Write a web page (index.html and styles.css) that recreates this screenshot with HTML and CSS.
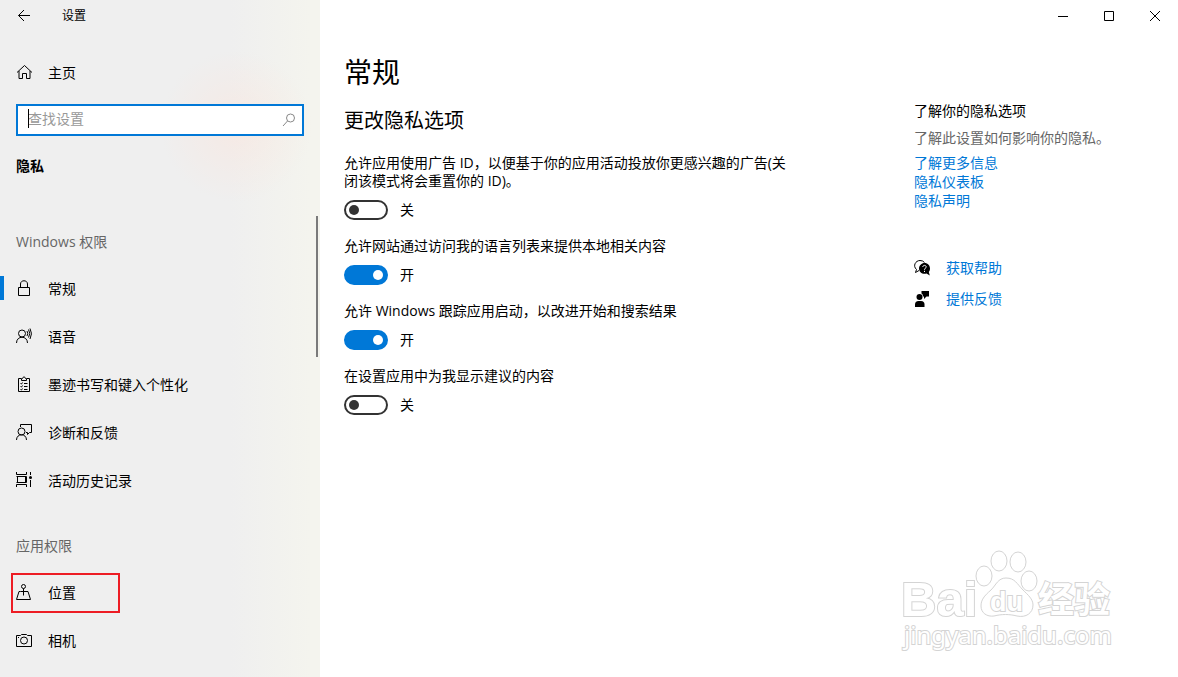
FILE: index.html
```html
<!doctype html>
<html lang="zh-CN">
  <head>
    <meta charset="utf-8">
    <title>设置</title>
    <meta name="viewport" content="width=device-width, initial-scale=1.0"/>
    <link rel="stylesheet" href="styles.css">
  </head>
  <body>

    <!--SIDEBAR-->
    <div id="sidebar">
        <div class="titlebar">
            <button class="back" type="button" aria-label="返回">
                <svg width="14" height="14" viewBox="0 0 14 14"><path d="M1.5 6.5H13M7 1L1.5 6.5L7 12"/></svg>
            </button>
            <span class="app-name">设置</span>
        </div>

        <a class="nav-item home" href="#home">
            <svg class="icon" viewBox="0 0 16 16"><path d="M1 8.5L8.5 1.5L16 8.5M3 7V14.5H6.5V9.5H10.5V14.5H14V7"/></svg>
            主页
        </a>

        <div class="search">
            <input id="search" type="text" placeholder="查找设置" aria-label="查找设置" autocomplete="off"/>
            <span class="caret"></span>
            <svg class="search-icon" width="14" height="14" viewBox="0 0 14 14"><circle cx="8.5" cy="5" r="4"/><path d="M5.5 8L1 13"/></svg>
        </div>

        <h2 class="section">隐私</h2>

        <nav>
            <h3>Windows 权限</h3>
            <a class="nav-item active" href="#general">
                <svg class="icon" viewBox="0 0 16 16"><path d="M2.5 7.5H13.5V15.5H2.5ZM4.5 7.5V4C4.5 -.3 11.5 -.3 11.5 4V7.5"/></svg>
                常规
            </a>
            <a class="nav-item" href="#speech">
                <svg class="icon" viewBox="0 0 16 16"><circle cx="6" cy="5.5" r="3.5"/><path d="M.5 15C.5 7.3 11.5 7.3 11.5 15M11 3Q12.5 5.5 11 8M12.5 1.5Q15 5.5 12.5 9.5M14 .5Q17 5.5 14 11"/></svg>
                语音
            </a>
            <a class="nav-item" href="#inking">
                <svg class="icon" viewBox="0 0 16 16"><path d="M5 2.5H2.5V15.5H13.5V2.5H11M5.5 4.5V2.5H6.5Q8 -1 9.5 2.5H10.5V4.5ZM4.5 7.5L5.5 8L6.5 6.5M4.5 10.5L5.5 11L6.5 9.5M4.5 13.5L5.5 14L6.5 12.5M8 7.5H11.5M8 10.5H11.5M8 13.5H11.5"/></svg>
                墨迹书写和键入个性化
            </a>
            <a class="nav-item" href="#diagnostics">
                <svg class="icon" viewBox="0 0 16 16"><circle cx="5.5" cy="7.5" r="3.5"/><path d="M.5 16C.5 9 10.5 9 10.5 16M4.5 3V.5H15.5V8.5H13.5L11.5 10.5V8.5H10"/></svg>
                诊断和反馈
            </a>
            <a class="nav-item" href="#activity">
                <svg class="icon" viewBox="0 0 16 16"><path d="M.5 0V2.5H10.5V0M.5 15V12.5H10.5V15M1.5 4.5V10.5M9.5 4.5V10.5M.5 4.5H10.5V10.5H.5M14.5 0V3M14.5 8V15"/><circle class="solid" cx="14.5" cy="5.5" r="1.5"/></svg>
                活动历史记录
            </a>

            <h3>应用权限</h3>
            <a class="nav-item marked" href="#location">
                <svg class="icon" viewBox="0 0 16 16"><circle cx="7.5" cy="2.5" r="2"/><path d="M7.5 4.5V11.5M4.5 7.5H3L.5 15.5H14.5L12 7.5H4.5"/></svg>
                位置
            </a>
            <a class="nav-item" href="#camera">
                <svg class="icon" viewBox="0 0 16 16"><path d="M.5 3.5H4.5L5.5 2.5H10.5L11.5 3.5H15.5V14.5H.5Z"/><circle cx="8" cy="8.5" r="3.5"/><path d="M2 5.5H3"/></svg>
                相机
            </a>
        </nav>
        <div class="scrollbar"></div>
    </div>

    <!--CONTENT-->
    <div id="main">
        <div class="titlebar window-buttons">
            <button type="button" aria-label="最小化"><svg width="12" height="12" viewBox="0 0 12 12"><path d="M1 6.5H11"/></svg></button>
            <button type="button" aria-label="最大化"><svg width="12" height="12" viewBox="0 0 12 12"><path d="M1.5 1.5H10.5V10.5H1.5Z"/></svg></button>
            <button type="button" aria-label="关闭"><svg width="12" height="12" viewBox="0 0 12 12"><path d="M1 1L11 11M11 1L1 11"/></svg></button>
        </div>

        <div class="columns">
            <main>
                <h1>常规</h1>
                <h2>更改隐私选项</h2>

                <div class="setting">
                    <label for="ad-id">允许应用使用广告 ID，以便基于你的应用活动投放你更感兴趣的广告(关闭该模式将会重置你的 ID)。</label>
                    <div class="toggle"><input id="ad-id" type="checkbox"/><span>关</span></div>
                </div>
                <div class="setting">
                    <label for="language">允许网站通过访问我的语言列表来提供本地相关内容</label>
                    <div class="toggle"><input id="language" type="checkbox" checked/><span>开</span></div>
                </div>
                <div class="setting">
                    <label for="launch">允许 Windows 跟踪应用启动，以改进开始和搜索结果</label>
                    <div class="toggle"><input id="launch" type="checkbox" checked/><span>开</span></div>
                </div>
                <div class="setting">
                    <label for="suggest">在设置应用中为我显示建议的内容</label>
                    <div class="toggle"><input id="suggest" type="checkbox"/><span>关</span></div>
                </div>
            </main>

            <aside>
                <h4>了解你的隐私选项</h4>
                <p>了解此设置如何影响你的隐私。</p>
                <div class="links">
                    <a href="#more">了解更多信息</a>
                    <a href="#dashboard">隐私仪表板</a>
                    <a href="#statement">隐私声明</a>
                </div>
                <div class="help">
                    <svg viewBox="0 0 16 16"><path class="line" d="M5 10.5L1.5 12.5L2.5 9.5C-1.5 6 1.5 .5 6 .5Q9 .5 10.5 2.5"/><path d="M10.5 3C14 3 16 5.5 16 8.5C16 10 15.5 11.2 14.8 12L15.8 15.5L12.5 13.6C8 14.5 5 12 5 8.5C5 5.5 7.5 3 10.5 3Z"/><path class="question" d="M8.8 7C8.8 4.8 12.3 4.9 12.2 7C12.1 8.3 10.5 8.2 10.5 9.8M10.5 10.8V12"/></svg>
                    <a href="#help">获取帮助</a>
                </div>
                <div class="help">
                    <svg viewBox="0 0 16 16"><path d="M7.5 0H15V5.5H12.5L10 8V5.5H9Q9 3 7.5 2.5Z"/><circle cx="5.5" cy="6" r="3"/><path d="M1 16V13.5Q1 10 4.5 10H7Q10.5 10 10.5 13.5V16Z"/></svg>
                    <a href="#feedback">提供反馈</a>
                </div>
            </aside>
        </div>
    </div>

    <!--WATERMARK-->
    <svg class="watermark" width="220" height="106" viewBox="0 0 220 106">
        <g class="brand">
            <text x="1" y="69">Bai</text>
            <path d="M106 31C98 31 96 38 91 43C84 49 81 53 81 59C81 66 87 70 94 69C102 67 109 67 117 69C126 71 133 66 133 58C133 52 128 48 123 43C117 37 115 31 106 31Z"/>
            <ellipse cx="84" cy="29" rx="8" ry="10"/>
            <ellipse cx="99" cy="14" rx="8" ry="10"/>
            <ellipse cx="118" cy="15" rx="8" ry="10"/>
            <ellipse cx="129" cy="34" rx="8" ry="10"/>
            <text class="du" x="90" y="64">du</text>
            <text class="jingyan" x="138" y="66">经验</text>
        </g>
        <text class="site" x="4" y="97">jingyan.baidu.com</text>
    </svg>

  </body>
</html>
```
FILE: styles.css
```css
*, *:before, *:after {
    box-sizing: border-box;
}

html,body{
    margin:0;
    padding:0;
}
body{
    display: flex;
    min-height:100vh;
    position: relative;
    background-color:#fff;
    color:#000;
    font-family: "Open Sans", "Noto Sans CJK SC", sans-serif;
    font-size: 14px;
    line-height: 20px;
}
h1,h2,h3,h4,p{
    margin:0;
    font-weight: normal;
}
a{
    color:#0078d7;
    text-decoration: none;
}
button{
    display: flex;
    align-items: center;
    justify-content: center;
    height:32px;
    padding:0;
    border:0;
    background: none;
}
svg{
    fill: none;
    stroke:#000;
    stroke-width: 1;
}
.titlebar{
    display: flex;
    align-items: center;
    height:32px;
}


/* sidebar */
#sidebar{
    position: relative;
    flex: 0 0 320px;
    background:
        radial-gradient(circle at 236px 126px, rgba(255,224,212,.4), rgba(255,224,212,0) 76px),
        linear-gradient(90deg, #efefef 0, #efefef 230px, #f4f4ee 310px);
}
.back{
    width:48px;
}
.app-name{
    margin-left:14px;
    font-size: 12px;
}
.nav-item{
    position: relative;
    display: flex;
    align-items: center;
    gap:16px;
    height:48px;
    padding-left:16px;
    color:#000;
}
.icon{
    width:16px;
    height:16px;
    margin-bottom:2px;
    overflow: visible;
}
.icon .solid{
    fill:#000;
    stroke: none;
}
.home{
    margin-top:17px;
}
.search{
    position: relative;
    margin:7px 16px 14px;
}
.search input{
    display: block;
    width:100%;
    height:32px;
    margin:0;
    padding:0 32px 3px 10px;
    border:2px solid #0078d7;
    border-radius: 0;
    background-color:#fff;
    font: inherit;
    outline: none;
}
.search input::placeholder{
    color:#999;
    opacity: 1;
}
.caret{
    position: absolute;
    left:12px;
    top:5px;
    width:1px;
    height:19px;
    background-color:#000;
}
.search-icon{
    position: absolute;
    right:8px;
    top:9px;
    stroke:#888;
}
.section{
    height:32px;
    margin:0 16px 19px;
    font-size: 14px;
    font-weight: bold;
    line-height: 32px;
}
nav h3{
    padding:18px 16px 0;
    color:#666;
    font-size: 14px;
    line-height: 46px;
}
.active:before{
    content: "";
    position: absolute;
    left:0;
    top:11px;
    width:4px;
    height:24px;
    background-color:#0078d7;
}
.marked:after{
    content: "";
    position: absolute;
    left:11px;
    top:4px;
    width:109px;
    height:40px;
    border:2px solid #ed1c24;
}
.scrollbar{
    position: absolute;
    right:2px;
    top:216px;
    width:2px;
    height:141px;
    background-color:#7a7a7a;
}


/* content */
#main{
    flex: 1;
    min-width: 0;
}
.window-buttons{
    justify-content: flex-end;
}
.window-buttons button{
    width:46px;
}
.columns{
    display: grid;
    grid-template-columns: minmax(0, 570px) 1fr;
    padding:20px 24px;
}
main{
    max-width:448px;
}
h1{
    margin-bottom:15px;
    font-size: 28px;
    line-height: 40px;
}
main h2{
    margin-bottom:19px;
    font-size: 20px;
    line-height: 28px;
}
.setting{
    margin-bottom:17px;
    line-height: 18px;
}
.setting label{
    display: block;
    margin-bottom:10px;
}
.toggle{
    display: flex;
    align-items: center;
    gap:12px;
    height:20px;
    line-height: 20px;
}
.toggle input{
    -webkit-appearance: none;
    appearance: none;
    position: relative;
    width:44px;
    height:20px;
    margin:0;
    border:2px solid #333;
    border-radius: 10px;
}
.toggle input:before{
    content: "";
    position: absolute;
    left:3px;
    top:3px;
    width:10px;
    height:10px;
    border-radius: 50%;
    background-color:#333;
}
.toggle input:checked{
    border-color:#0078d7;
    background-color:#0078d7;
}
.toggle input:checked:before{
    left:27px;
    background-color:#fff;
}

aside{
    padding-top:49px;
}
aside h4{
    margin-bottom:7px;
    font-size: 14px;
}
aside p{
    margin-bottom:5px;
    color:#666;
}
.links{
    display: flex;
    flex-direction: column;
    align-items: flex-start;
    margin-bottom:48px;
    line-height: 19px;
}
.help{
    display: flex;
    align-items: center;
    gap:16px;
    margin-bottom:11px;
}
.help svg{
    width:16px;
    height:16px;
    fill:#000;
    stroke: none;
    overflow: visible;
}
.help .line{
    fill: none;
    stroke:#000;
}
.help .question{
    fill: none;
    stroke:#fff;
}


/* watermark */
.watermark{
    position: absolute;
    right:58px;
    bottom:24px;
    fill:#fff;
    stroke:#d4d4d4;
    pointer-events: none;
}
.watermark text{
    font-family: "Liberation Sans", sans-serif;
    font-weight: bold;
    paint-order: stroke;
    stroke-width: 2px;
}
.brand text{
    font-size: 49px;
}
.brand .du{
    font-size: 27px;
}
.brand .jingyan{
    font-family: "Noto Sans CJK SC", sans-serif;
    font-size: 36px;
}
.watermark .site{
    font-family: "Noto Sans", sans-serif;
    font-size: 24px;
    font-weight: normal;
}
```
